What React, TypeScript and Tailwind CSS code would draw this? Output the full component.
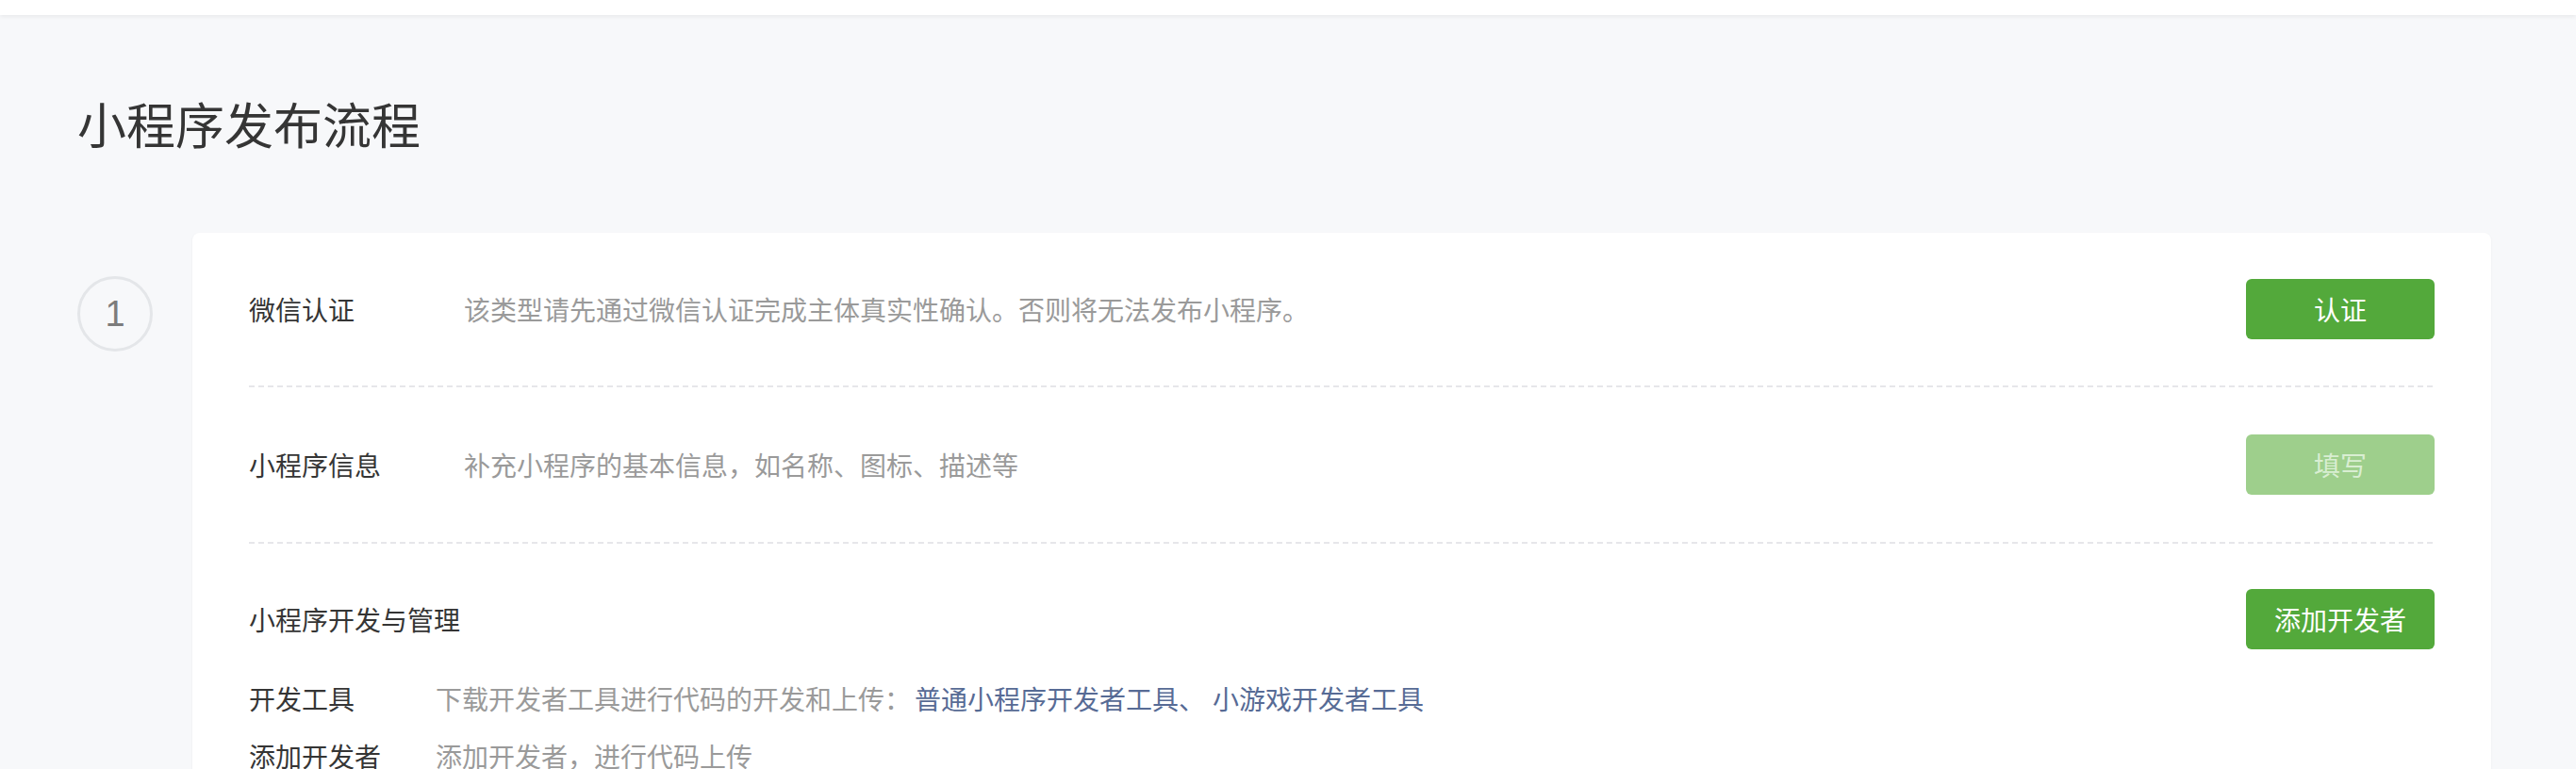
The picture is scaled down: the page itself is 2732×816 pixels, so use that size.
import React from "react";

function Dashed() {
  return (
    <div className="h-[2px] w-full bg-[linear-gradient(to_right,#e6e6ea_6px,transparent_6px)] bg-[length:10px_2px] bg-repeat-x" />
  );
}

function GreenButton({ children, disabled }: { children: React.ReactNode; disabled?: boolean }) {
  return (
    <button
      className={
        disabled
          ? "flex h-[64px] w-[200px] shrink-0 items-center justify-center rounded-[6px] bg-[#9ecf8c] text-[28px] leading-none text-[#d9eed2]"
          : "flex h-[64px] w-[200px] shrink-0 items-center justify-center rounded-[6px] bg-[#53a93b] text-[28px] leading-none text-white"
      }
    >
      {children}
    </button>
  );
}

export default function App() {
  return (
    <div className="min-h-screen bg-[#f7f8fa] font-['Noto_Sans_CJK_SC','Noto_Sans',sans-serif]">
      <div className="h-[16px] bg-white shadow-[0_2px_4px_rgba(0,0,0,0.06)]" />
      <div className="pl-[82px] pr-[90px]">
        <h1 className="mt-[79px] text-[52px] font-normal leading-[72px] text-[#353535]">小程序发布流程</h1>
        <div className="mt-[80px] flex gap-[42px]">
          <div className="mt-[46px] flex h-[80px] w-[80px] shrink-0 items-center justify-center rounded-full border-[3px] border-[#e4e6e9] font-['Liberation_Sans',sans-serif] text-[38px] leading-none text-[#7c7c7c]">
            1
          </div>
          <div className="flex-1 rounded-[8px] bg-white px-[60px] shadow-[0_1px_3px_rgba(0,0,0,0.05)]">
            <div className="flex items-center py-[49px]">
              <div className="w-[228px] shrink-0 text-[28px] text-[#353535]">微信认证</div>
              <div className="flex-1 text-[28px] text-[#9a9a9a]">该类型请先通过微信认证完成主体真实性确认。否则将无法发布小程序。</div>
              <GreenButton>认证</GreenButton>
            </div>
            <Dashed />
            <div className="flex items-center py-[50px]">
              <div className="w-[228px] shrink-0 text-[28px] text-[#353535]">小程序信息</div>
              <div className="flex-1 text-[28px] text-[#9a9a9a]">补充小程序的基本信息，如名称、图标、描述等</div>
              <GreenButton disabled>填写</GreenButton>
            </div>
            <Dashed />
            <div className="pt-[48px] pb-[40px]">
              <div className="flex items-center">
                <div className="flex-1 text-[28px] text-[#353535]">小程序开发与管理</div>
                <GreenButton>添加开发者</GreenButton>
              </div>
              <div className="mt-[21px]">
                <div className="flex h-[61px] items-center text-[28px]">
                  <div className="w-[198px] shrink-0 text-[#353535]">开发工具</div>
                  <div className="text-[#9a9a9a]">下载开发者工具进行代码的开发和上传：</div>
                  <a className="ml-[4px] text-[#576b95]">普通小程序开发者工具</a>
                  <span className="text-[#576b95]">、 </span>
                  <a className="ml-[8px] text-[#576b95]">小游戏开发者工具</a>
                </div>
                <div className="flex h-[61px] items-center text-[28px]">
                  <div className="w-[198px] shrink-0 text-[#353535]">添加开发者</div>
                  <div className="text-[#9a9a9a]">添加开发者，进行代码上传</div>
                </div>
              </div>
            </div>
          </div>
        </div>
      </div>
    </div>
  );
}
